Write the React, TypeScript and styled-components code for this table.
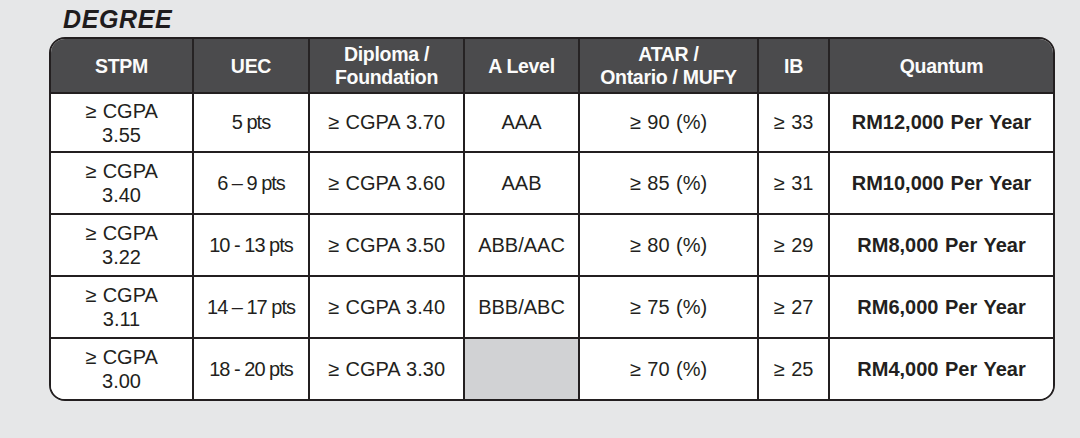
import React from 'react';
import styled, {createGlobalStyle} from "styled-components";

const rows = [
    {stpm: ['≥ CGPA', '3.55'], uec: '5 pts', diploma: '≥ CGPA 3.70', alevel: 'AAA', atar: '≥ 90 (%)', ib: '≥ 33', quantum: 'RM12,000 Per Year', h: 59},
    {stpm: ['≥ CGPA', '3.40'], uec: '6 – 9 pts', diploma: '≥ CGPA 3.60', alevel: 'AAB', atar: '≥ 85 (%)', ib: '≥ 31', quantum: 'RM10,000 Per Year', h: 62},
    {stpm: ['≥ CGPA', '3.22'], uec: '10 - 13 pts', diploma: '≥ CGPA 3.50', alevel: 'ABB/AAC', atar: '≥ 80 (%)', ib: '≥ 29', quantum: 'RM8,000 Per Year', h: 62},
    {stpm: ['≥ CGPA', '3.11'], uec: '14 – 17 pts', diploma: '≥ CGPA 3.40', alevel: 'BBB/ABC', atar: '≥ 75 (%)', ib: '≥ 27', quantum: 'RM6,000 Per Year', h: 62},
    {stpm: ['≥ CGPA', '3.00'], uec: '18 - 20 pts', diploma: '≥ CGPA 3.30', alevel: '', atar: '≥ 70 (%)', ib: '≥ 25', quantum: 'RM4,000 Per Year', h: 60},
]

const headers = ['STPM', 'UEC', 'Diploma /\nFoundation', 'A Level', 'ATAR /\nOntario / MUFY', 'IB', 'Quantum']

const App = () => {
    return (
        <Page>
            <GlobalStyle/>
            <Title>DEGREE</Title>
            <Table rowsHeights={rows.map(r => r.h)}>
                {headers.map((h, i) => <HeadCell key={h} last={i === headers.length - 1}>{h}</HeadCell>)}
                {rows.map((r, ri) => {
                    const lastRow = ri === rows.length - 1
                    return (
                        <React.Fragment key={ri}>
                            <Cell lastRow={lastRow}><Stack>{r.stpm[0]}<br/>{r.stpm[1]}</Stack></Cell>
                            <Cell lastRow={lastRow} tight>{r.uec}</Cell>
                            <Cell lastRow={lastRow}>{r.diploma}</Cell>
                            <Cell lastRow={lastRow} empty={r.alevel === ''}>{r.alevel}</Cell>
                            <Cell lastRow={lastRow}>{r.atar}</Cell>
                            <Cell lastRow={lastRow}>{r.ib}</Cell>
                            <Cell lastRow={lastRow} last bold>{r.quantum}</Cell>
                        </React.Fragment>
                    )
                })}
            </Table>
        </Page>
    );
};

const GlobalStyle = createGlobalStyle`
  html, body {
    margin: 0;
    padding: 0;
    background: #e6e7e8;
  }
  body {
    font-family: "Liberation Sans", Arial, sans-serif;
    color: #231f20;
  }
`

const Page = styled.div`
  width: 1080px;
  height: 438px;
  box-sizing: border-box;
  padding: 4px 25px 0 49px;
  display: flex;
  flex-direction: column;
  gap: 3px;
  background: #e6e7e8;
`

const Title = styled.div`
  margin-left: 14px;
  font-size: 25px;
  line-height: 30px;
  font-weight: bold;
  font-style: italic;
  letter-spacing: 0.6px;
  color: #1f1c1d;
`

const Table = styled.div<{ rowsHeights: number[] }>`
  width: 1006px;
  height: 364px;
  box-sizing: border-box;
  border: 2px solid #231f20;
  border-radius: 16px;
  overflow: hidden;
  background: #fff;
  display: grid;
  grid-template-columns: 143px 116px 155px 115px 179px 71px 1fr;
  grid-template-rows: 55px ${({rowsHeights}) => rowsHeights.map(h => `${h}px`).join(' ')};
`

const HeadCell = styled.div<{ last?: boolean }>`
  box-sizing: border-box;
  background: #4b4b4d;
  color: #fbfbfb;
  border-right: ${({last}) => last ? 'none' : '2px solid #262324'};
  border-bottom: 2px solid #231f20;
  display: flex;
  align-items: center;
  justify-content: center;
  text-align: center;
  white-space: pre-line;
  font-weight: bold;
  font-size: 19.5px;
  line-height: 23px;
  letter-spacing: -0.3px;
  padding-top: 1px;
`

const Cell = styled.div<{ last?: boolean, lastRow?: boolean, bold?: boolean, empty?: boolean, tight?: boolean }>`
  box-sizing: border-box;
  background: ${({empty}) => empty ? '#d1d2d4' : '#fff'};
  border-right: ${({last}) => last ? 'none' : '2px solid #231f20'};
  border-bottom: ${({lastRow}) => lastRow ? 'none' : '2px solid #231f20'};
  display: flex;
  align-items: center;
  justify-content: center;
  text-align: center;
  font-size: 20px;
  font-weight: ${({bold}) => bold ? 'bold' : 'normal'};
  letter-spacing: ${({tight}) => tight ? '-1px' : '0'};
  word-spacing: ${({tight}) => tight ? '0' : '1px'};
  color: #231f20;
`

const Stack = styled.div`
  line-height: 24px;
`

export default App;
